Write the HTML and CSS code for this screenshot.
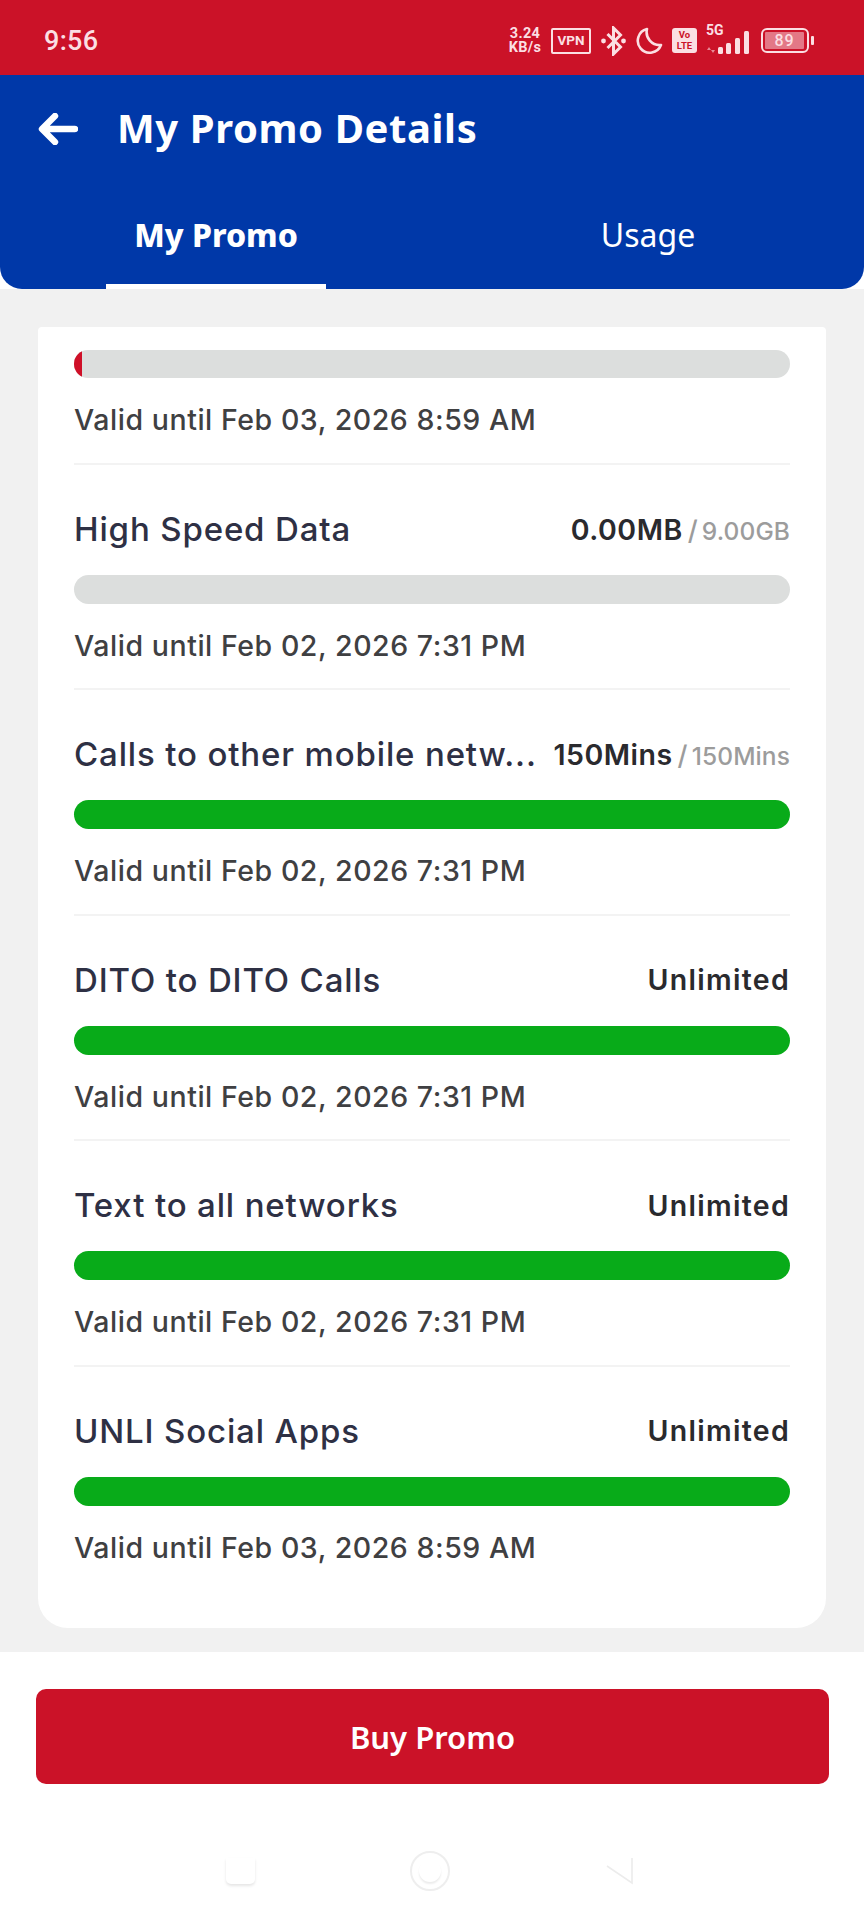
FILE: index.html
```html
<!DOCTYPE html>
<html lang="en">
<head>
<meta charset="utf-8">
<title>My Promo Details</title>
<link rel="stylesheet" href="styles.css">
</head>
<body>
<div class="screen">
  <div class="status">
    <span class="time">9:56</span>
    <div class="status-icons">
      <span class="speed">3.24<br>KB/s</span>
      <span class="vpn">VPN</span>
      <svg class="bt" width="27" height="30" viewBox="0 0 26 30"><path d="M7 8l13 13-7 7V2l7 7L7 22" fill="none" stroke="#fbdfe3" stroke-width="3"/><circle cx="3" cy="15" r="2.4" fill="#fbdfe3"/><circle cx="23" cy="15" r="2.4" fill="#fbdfe3"/></svg>
      <svg class="moon" width="27" height="27" viewBox="0 0 27 27"><path d="M11 2a12 12 0 1 0 14 16A13 13 0 0 1 11 2z" fill="none" stroke="#fbdfe3" stroke-width="2.6" stroke-linejoin="round"/></svg>
      <span class="volte">Vo<br>LTE</span>
      <div class="net">
        <span class="fiveg">5G</span>
        <svg width="46" height="26" viewBox="0 0 46 26"><path d="M3 18l-2 3h4zM7 24l-2-3h4z" fill="#e88a97"/><rect x="12" y="18" width="5" height="7" rx="1.5" fill="#fbdfe3"/><rect x="20" y="14" width="5" height="11" rx="1.5" fill="#fbdfe3"/><rect x="29" y="9" width="5" height="16" rx="1.5" fill="#fbdfe3"/><rect x="38" y="2" width="5" height="23" rx="1.5" fill="#fbdfe3"/></svg>
      </div>
      <div class="battery"><span class="battery-body"><span class="battery-level">89</span></span><span class="battery-tip"></span></div>
    </div>
  </div>

  <header class="header">
    <div class="title-row">
      <svg class="back" width="40" height="32" viewBox="0 0 40 32"><path d="M17 3L4 16l13 13M5 16h32" fill="none" stroke="#fff" stroke-width="6.4" stroke-linecap="round" stroke-linejoin="round"/></svg>
      <h1 class="title">My Promo Details</h1>
    </div>
    <nav class="tabs">
      <div class="tab tab-active"><span>My Promo</span></div>
      <div class="tab"><span>Usage</span></div>
    </nav>
  </header>

  <main class="content">
    <section class="card">
      <div class="row row-first">
        <div class="bar"><span class="fill-red"></span></div>
        <p class="valid">Valid until Feb 03, 2026 8:59 AM</p>
      </div>
      <div class="row">
        <div class="row-head">
          <span class="name">High Speed Data</span>
          <span class="amount">0.00MB<small class="total"><i>/</i>9.00GB</small></span>
        </div>
        <div class="bar"></div>
        <p class="valid">Valid until Feb 02, 2026 7:31 PM</p>
      </div>
      <div class="row">
        <div class="row-head">
          <span class="name">Calls to other mobile netw...</span>
          <span class="amount">150Mins<small class="total"><i>/</i>150Mins</small></span>
        </div>
        <div class="bar bar-green"></div>
        <p class="valid">Valid until Feb 02, 2026 7:31 PM</p>
      </div>
      <div class="row">
        <div class="row-head">
          <span class="name">DITO to DITO Calls</span>
          <span class="amount amount-wide">Unlimited</span>
        </div>
        <div class="bar bar-green"></div>
        <p class="valid">Valid until Feb 02, 2026 7:31 PM</p>
      </div>
      <div class="row">
        <div class="row-head">
          <span class="name">Text to all networks</span>
          <span class="amount amount-wide">Unlimited</span>
        </div>
        <div class="bar bar-green"></div>
        <p class="valid">Valid until Feb 02, 2026 7:31 PM</p>
      </div>
      <div class="row row-last">
        <div class="row-head">
          <span class="name">UNLI Social Apps</span>
          <span class="amount amount-wide">Unlimited</span>
        </div>
        <div class="bar bar-green"></div>
        <p class="valid">Valid until Feb 03, 2026 8:59 AM</p>
      </div>
    </section>
  </main>

  <footer class="footer">
    <button class="buy">Buy Promo</button>
    <div class="navbar">
      <span class="nav-square"></span>
      <span class="nav-circle"><span class="nav-dot"></span></span>
      <svg class="nav-back" width="30" height="30" viewBox="0 0 30 30"><path d="M28 2v25L3 10" fill="none" stroke="#ececec" stroke-width="1.6"/></svg>
    </div>
  </footer>
</div>
</body>
</html>
```
FILE: styles.css
```css
* { box-sizing: border-box; }
html, body { margin: 0; padding: 0; background: #fff; }
.screen {
  width: 864px;
  height: 1920px;
  display: flex;
  flex-direction: column;
  overflow: hidden;
  font-family: "Inter", "Liberation Sans", sans-serif;
}
.status {
  height: 75px;
  flex: none;
  background: #cb1228;
  display: flex;
  align-items: center;
  justify-content: space-between;
  padding: 6px 50px 0 44px;
  color: #fbdfe3;
}
.time { font: 500 27px "Roboto", sans-serif; letter-spacing: .3px; }
.status-icons { display: flex; align-items: center; gap: 9px; }
.speed { font: 700 14.5px/14px "Roboto", sans-serif; width: 34px; text-align: center; letter-spacing: .3px; }
.vpn {
  width: 40px; height: 26px;
  border: 2.4px solid #fbdfe3;
  font: 700 13.5px/21px "Roboto", sans-serif;
  text-align: center;
  border-radius: 2px;
}
.volte {
  width: 25px; height: 25px;
  background: #fbdfe3;
  color: #cb1228;
  border-radius: 3px;
  font: 700 9.5px/10.5px "Roboto", sans-serif;
  text-align: center;
  padding-top: 2px;
}
.net { position: relative; width: 46px; height: 28px; }
.net svg { position: absolute; left: 0; bottom: 0; }
.fiveg { position: absolute; left: 0; top: -4px; font: 700 14px/15px "Roboto", sans-serif; }
.battery { display: flex; align-items: center; gap: 2px; }
.battery-body {
  width: 48px; height: 25px;
  border: 2.2px solid #fbdfe3;
  border-radius: 6px;
  padding: 2px;
  display: block;
}
.battery-level {
  display: block;
  width: 39px; height: 17px;
  background: #e37886;
  font: 500 16px/17px "Roboto", sans-serif;
  text-align: center;
  color: #fbdfe3;
  border-radius: 1px;
  letter-spacing: 1px;
}
.battery-tip { width: 3px; height: 9px; background: #fbdfe3; border-radius: 1px; }

.header {
  height: 214px;
  flex: none;
  background: #0038a8;
  border-radius: 0 0 22px 22px;
  color: #fff;
  display: flex;
  flex-direction: column;
}
.title-row {
  height: 107px;
  display: flex;
  align-items: center;
  padding: 0 0 0 38px;
  flex: none;
}
.back { flex: none; }
.title {
  margin: 0 0 2px 39px;
  font: 700 40px "Noto Sans", sans-serif;
  letter-spacing: .6px;
  color: #fff;
}
.tabs { flex: 1; display: flex; }
.tab {
  width: 432px;
  display: flex;
  justify-content: center;
  font: 400 32px "Noto Sans", sans-serif;
}
.tab span {
  display: block;
  width: 220px;
  height: 107px;
  text-align: center;
  padding-top: 31px;
  line-height: 44px;
}
.tab-active span { font-weight: 800; border-bottom: 5px solid #fff; }

.content {
  flex: 1;
  background: #f1f1f1;
  padding: 38px 38px 24px;
  min-height: 0;
}
.card {
  background: #fff;
  border-radius: 4px 4px 30px 30px;
  padding: 0 36px;
  height: 100%;
}
.row {
  height: 225.4px;
  border-bottom: 2px solid #f3f3f3;
  padding-top: 43px;
}
.row-first { height: 138px; padding-top: 23px; }
.row-last { border-bottom: 0; }
.row-head {
  height: 42px;
  display: flex;
  align-items: center;
  justify-content: space-between;
  gap: 10px;
  white-space: nowrap;
}
.name {
  font: 500 33px "Inter", sans-serif;
  color: #2e3044;
  letter-spacing: .85px;
}
.amount { font: 600 28.5px "Inter", sans-serif; color: #2a2a2e; letter-spacing: .5px; }
.amount-wide { letter-spacing: 1.3px; }
.total { font: 500 24.5px "Inter", sans-serif; color: #9c9c9c; letter-spacing: .1px; }
.total i { font-style: normal; margin: 0 4px 0 5px; font-size: 27px; }
.bar {
  height: 29px;
  margin-top: 25px;
  background: #dcdedd;
  border-radius: 15px;
  overflow: hidden;
}
.row-first .bar { margin-top: 0; height: 28px; }
.bar-green { background: #08ab19; }
.fill-red {
  display: block;
  width: 8px;
  height: 100%;
  background: #cf1028;
}
.valid {
  margin: 24px 0 0;
  font: 500 28.5px/36px "Inter", sans-serif;
  color: #3f4042;
  letter-spacing: .55px;
}

.footer {
  flex: none;
  height: 268px;
  background: #fff;
  padding-top: 37px;
}
.buy {
  display: block;
  width: 793px;
  height: 95px;
  margin: 0 0 0 36px;
  border: 0;
  border-radius: 10px;
  background: #cb1228;
  color: #fff;
  font: 600 31px "Noto Sans", sans-serif;
  padding: 0;
}
.navbar {
  position: relative;
  height: 136px;
}
.nav-square {
  position: absolute;
  left: 226px; top: 74px;
  width: 29px; height: 26px;
  border-radius: 0 0 5px 5px;
  box-shadow: 0 2px 3px #e6e6e6;
  background: #fff;
}
.nav-circle {
  position: absolute;
  left: 410px; top: 67px;
  width: 40px; height: 40px;
  border-radius: 50%;
  border: 2px solid #eeeeee;
  display: flex;
  justify-content: center;
  align-items: center;
}
.nav-dot {
  width: 22px; height: 22px; border-radius: 50%;
  box-shadow: 0 2px 2px #ececec;
  background: #fff;
}
.nav-back { position: absolute; left: 604px; top: 72px; }
```
